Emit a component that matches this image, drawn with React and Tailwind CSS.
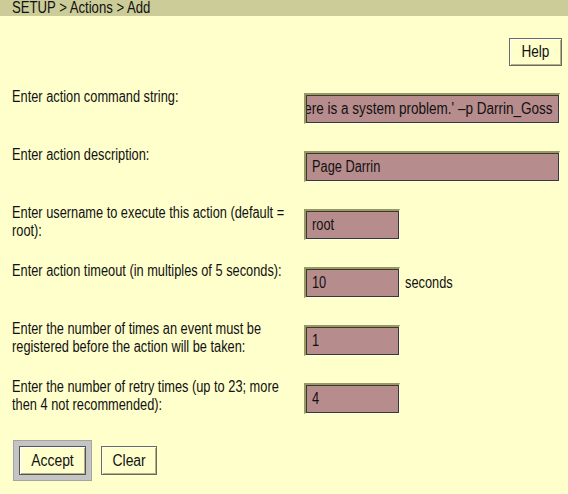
import React from "react";

const FONT = { fontFamily: '"Liberation Sans", Arial, sans-serif' };

// the reference uses a narrow X11 helvetica; squeeze Liberation Sans to match its widths
function Narrow({ children, origin = "origin-left", scale = "scale-x-[0.8]" }) {
  return <span className={`inline-block whitespace-nowrap ${origin} ${scale}`}>{children}</span>;
}

function Field({ value, wide, alignEnd }) {
  return (
    <div
      className={`${wide ? "w-[256px]" : "w-[96px]"} h-[31px] shrink-0 border-t-2 border-l-2 border-b border-r border-t-[#999966] border-l-[#999966] border-b-[#ffffee] border-r-[#ffffee]`}
    >
      <div
        className={`flex h-full items-center overflow-hidden whitespace-nowrap border border-[#3a3a2c] bg-[#b78c8c] text-[16px] text-[#111] ${alignEnd ? "justify-end pr-[5px]" : "pl-[5px]"}`}
      >
        <span className="shrink-0">
          <Narrow
            origin={alignEnd ? "origin-right" : "origin-left"}
            scale={alignEnd ? "scale-x-[0.845]" : "scale-x-[0.8]"}
          >
            {value}
          </Narrow>
        </span>
      </div>
    </div>
  );
}

function Row({ children, lines }) {
  return (
    <div className="flex h-[58px] items-start">
      <div className="w-[304px] shrink-0 pl-3 text-[16px] leading-[18px] text-[#111]">
        {lines.map((line) => (
          <div key={line}>
            <Narrow>{line}</Narrow>
          </div>
        ))}
      </div>
      <div className="mt-[5px] flex items-center">{children}</div>
    </div>
  );
}

const buttonCls =
  "bg-[#ffffcc] text-[16px] text-[#111] shadow-[inset_1px_1px_0_#ffffff,inset_-1px_-1px_0_#b0b090]";

export default function App() {
  return (
    <div className="min-h-[494px] w-full bg-[#ffffcc]" style={FONT}>
      {/* header */}
      <div className="h-4 bg-[#cccc99] pl-3 text-[16px] leading-4 text-[#111]">
        <Narrow scale="scale-x-[0.82]">SETUP &gt; Actions &gt; Add</Narrow>
      </div>

      <div className="flex justify-end pr-[6px] pt-[22px]">
        <button className={`h-[28px] w-[53px] border border-[#6b6b5a] ${buttonCls}`}>
          <Narrow origin="origin-center" scale="scale-x-[0.85]">Help</Narrow>
        </button>
      </div>

      <div className="mt-[22px]">
        <Row lines={["Enter action command string:"]}>
          <Field wide alignEnd value="'There is a system problem.' –p Darrin_Goss" />
        </Row>
        <Row lines={["Enter action description:"]}>
          <Field wide value="Page Darrin" />
        </Row>
        <Row lines={["Enter username to execute this action (default =", "root):"]}>
          <Field value="root" />
        </Row>
        <Row lines={["Enter action timeout (in multiples of 5 seconds):"]}>
          <Field value="10" />
          <span className="ml-[5px] text-[16px] text-[#111]">
            <Narrow>seconds</Narrow>
          </span>
        </Row>
        <Row lines={["Enter the number of times an event must be", "registered before the action will be taken:"]}>
          <Field value="1" />
        </Row>
        <Row lines={["Enter the number of retry times (up to 23; more", "then 4 not recommended):"]}>
          <Field value="4" />
        </Row>
      </div>

      {/* actions */}
      <div className="mt-[4px] flex items-start gap-[9px] pl-[13px]">
        <div className="border border-[#a4a4a4] bg-[#c4c4c4] p-[5px]">
          <button className={`h-[29px] w-[67px] border border-[#55554a] ${buttonCls}`}>
            <Narrow origin="origin-center" scale="scale-x-[0.87]">Accept</Narrow>
          </button>
        </div>
        <button className={`mt-[6px] h-[29px] w-[56px] border border-[#6b6b5a] ${buttonCls}`}>
          <Narrow origin="origin-center" scale="scale-x-[0.87]">Clear</Narrow>
        </button>
      </div>
    </div>
  );
}
